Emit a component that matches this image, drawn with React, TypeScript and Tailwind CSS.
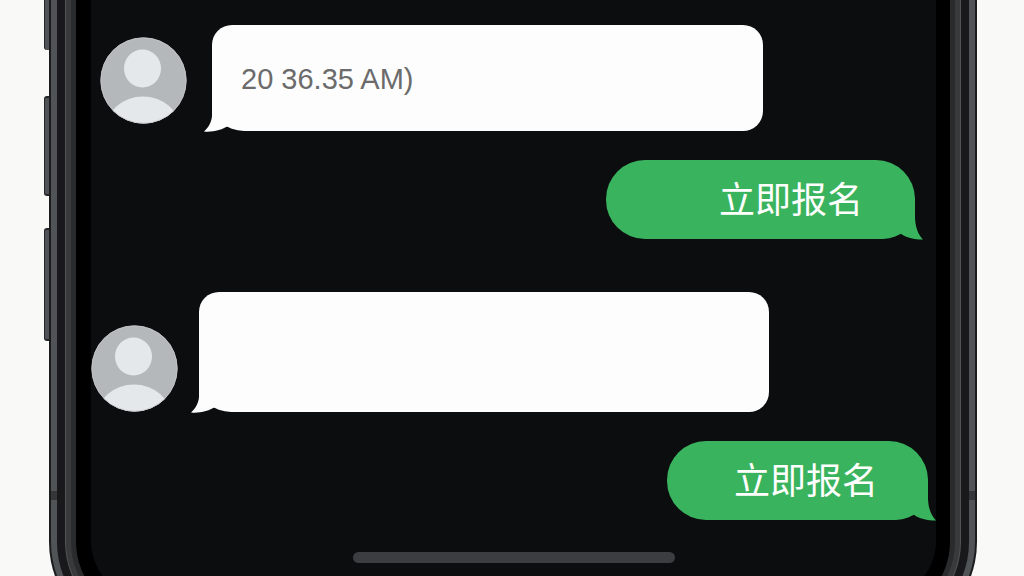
import type { ReactNode } from 'react'
import clsx from 'clsx'

function Avatar() {
  return (
    <svg viewBox="0 0 87 87" className="size-[87px] shrink-0" role="img" aria-label="Contact">
      <defs>
        <clipPath id="avatar-clip">
          <circle cx="43.5" cy="43.5" r="43" />
        </clipPath>
      </defs>
      <circle cx="43.5" cy="43.5" r="43" fill="#b5b8ba" />
      <g clipPath="url(#avatar-clip)" fill="#e5e8ea">
        <ellipse cx="42.5" cy="31.5" rx="18.5" ry="19" />
        <ellipse cx="43" cy="92" rx="37" ry="32.5" />
      </g>
      <circle cx="43.5" cy="43.5" r="42.7" fill="none" stroke="#c6c8c9" strokeWidth="0.8" />
    </svg>
  )
}

function IncomingBubble({ className, children }: { className?: string; children?: ReactNode }) {
  return (
    <div
      className={clsx(
        'relative flex flex-1 items-center rounded-[20px] rounded-bl-[32px_28px] bg-[#fdfdfd] px-[29px]',
        className,
      )}
    >
      {children}
      <svg
        viewBox="0 0 26 30"
        className="absolute -bottom-px -left-2 h-[30px] w-[26px]"
        fill="#fdfdfd"
        aria-hidden="true"
      >
        <path d="M8 0V14C7.5 20 5 25 0 29.5C8 30.5 18 28 25 23.5Z" />
      </svg>
    </div>
  )
}

function OutgoingBubble({ className, children }: { className?: string; children: ReactNode }) {
  return (
    <div
      className={clsx(
        'relative flex h-[79px] items-center justify-end rounded-[39px] rounded-br-[32px] bg-[#3ab35e] pt-[2px]',
        className,
      )}
    >
      <p className="text-4xl text-white">{children}</p>
      <svg
        viewBox="0 0 24 44"
        className="absolute -right-2 -bottom-px h-11 w-6"
        fill="#3ab35e"
        aria-hidden="true"
      >
        <path d="M16 0V22C16.5 32 19 38 24 43.5C15 43.5 7 41.5 1.5 37.5L4 28Z" />
      </svg>
    </div>
  )
}

// Antenna break in the metal band
function AntennaLine({ className }: { className: string }) {
  return <span className={clsx('absolute bottom-[140px] h-[9px] w-[6px] bg-[#343638]', className)} />
}

// Concentric metal and glass layers around the screen
function PhoneBody({ children }: { children: ReactNode }) {
  return (
    <div className="min-w-0 flex-1 self-start rounded-b-[100px] bg-[#1b1c1e] px-[2px] pb-[2px]">
      <div className="relative rounded-b-[98px] bg-[#515457] px-[6px] pb-[6px]">
        <AntennaLine className="left-0" />
        <AntennaLine className="right-0" />
        <div className="rounded-b-[92px] bg-[#19191c] px-[8px] pb-[8px]">
          <div className="rounded-b-[84px] bg-[#515355] px-px pb-px">
            <div className="rounded-b-[83px] bg-[#393a3c] px-[5px] pb-[5px]">
              <div className="rounded-b-[78px] bg-[#2a2b2c] px-[5px] pb-[5px]">
                <div className="rounded-b-[73px] bg-black pr-[14px] pb-[16px] pl-[15px]">
                  <div className="rounded-b-[58px] bg-[#0b0d0f]">{children}</div>
                </div>
              </div>
            </div>
          </div>
        </div>
      </div>
    </div>
  )
}

function SideButtons() {
  return (
    <div className="flex w-[5px] shrink-0 flex-col">
      <span className="h-[50px] rounded-bl-[3px] border-l border-[#242526] bg-[#505355]" />
      <span className="mt-[46px] h-[100px] rounded-l-[3px] border-y-2 border-l border-[#242526] bg-[#505355]" />
      <span className="mt-8 h-[113px] rounded-l-[3px] border-y-2 border-l border-[#242526] bg-[#505355]" />
    </div>
  )
}

export default function App() {
  return (
    <div className="flex h-screen overflow-hidden bg-[#f9f9f8] pr-[47px] pl-11 font-['Liberation_Sans','Noto_Sans_CJK_SC',sans-serif]">
      <SideButtons />
      <PhoneBody>
        <main className="flex flex-col pt-[25px] pb-9">
          <div className="flex items-start gap-[25px] pr-[173px] pl-[9px]">
            <div className="pt-3">
              <Avatar />
            </div>
            <IncomingBubble className="h-[106px] pt-1">
              <p className="text-[29px] text-[#6b6b6b]">20 36.35 AM)</p>
            </IncomingBubble>
          </div>

          <div className="mt-[29px] flex justify-end pr-[21px]">
            <OutgoingBubble className="w-[309px] pr-[52px]">立即报名</OutgoingBubble>
          </div>

          <div className="mt-[53px] flex items-end gap-[21px] pr-[167px]">
            <Avatar />
            <IncomingBubble className="h-[120px]" />
          </div>

          <div className="mt-[29px] flex justify-end pr-2">
            <OutgoingBubble className="w-[261px] pr-[50px]">立即报名</OutgoingBubble>
          </div>

          {/* Home indicator */}
          <div className="mt-8 h-[11px] w-[322px] self-center rounded-full bg-[#3c3d40]" />
        </main>
      </PhoneBody>
    </div>
  )
}
